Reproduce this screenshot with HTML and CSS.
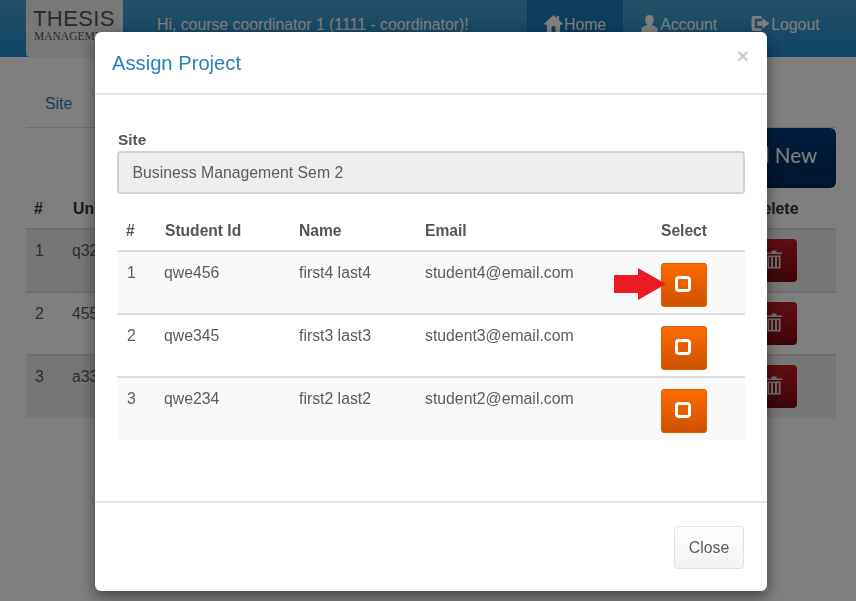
FILE: index.html
```html
<!DOCTYPE html>
<html lang="en">
<head>
    <meta charset="UTF-8">
    <title>Thesis Management</title>
    <link rel="stylesheet" href="styles.css">
</head>
<body>
    <header class="topbar">
        <div class="logo">
            <div class="logo-main">THESIS</div>
            <div class="logo-sub">MANAGEMENT</div>
        </div>
        <div class="greeting">Hi, course coordinator 1 (1111 - coordinator)!</div>
        <nav class="topnav">
            <a class="nav-item active">
                <svg class="nav-icon" viewBox="0 0 20 18"><path d="M10 0 L13.500 3.200 V1 H16 V5.500 L20 9.200 L19 10.200 H17 V18 H12 V12 H8 V18 H3 V10.200 H1 L0 9.200 Z"/></svg>Home
            </a>
            <a class="nav-item">
                <svg class="nav-icon" viewBox="0 0 18 18"><path d="M9 0 C12 0 13.500 2.200 13.500 5 C13.500 7.500 12.300 9.500 11.200 10.500 C14.500 11.500 17.500 12.800 17.500 15 V18 H0.500 V15 C0.500 12.800 3.500 11.500 6.800 10.500 C5.700 9.500 4.500 7.500 4.500 5 C4.500 2.200 6 0 9 0 Z"/></svg>Account
            </a>
            <a class="nav-item">
                <svg class="nav-icon" viewBox="0 0 20 18"><path d="M3 1 H11 V4 H4 V14 H11 V17 H3 Q0.500 17 0.500 14.500 V3.500 Q0.500 1 3 1 Z M12 3.500 L19.500 9 L12 14.500 V11.500 H6.500 V6.500 H12 Z"/></svg>Logout
            </a>
        </nav>
    </header>

    <main class="page">
        <div class="tabs"><a class="tab">Site</a></div>
        <div class="page-actions"><button class="btn-add">Add New</button></div>
        <table class="page-table">
            <thead>
                <tr><th class="col-num">#</th><th>Unit</th><th class="col-delete">Delete</th></tr>
            </thead>
            <tbody>
                <tr>
                    <td>1</td><td>q321</td>
                    <td class="col-delete"><button class="btn-delete"><svg class="trash" viewBox="0 0 16 18"><path d="M5.500 0 H10.500 V2 H16 V3.500 H0 V2 H5.500 Z M1.500 5 H14.500 V18 H1.500 Z M3.200 6.500 V16.500 H5 V6.500 Z M7 6.500 V16.500 H9 V6.500 Z M11 6.500 V16.500 H12.800 V6.500 Z" fill-rule="evenodd"/></svg></button></td>
                </tr>
                <tr>
                    <td>2</td><td>4556</td>
                    <td class="col-delete"><button class="btn-delete"><svg class="trash" viewBox="0 0 16 18"><path d="M5.500 0 H10.500 V2 H16 V3.500 H0 V2 H5.500 Z M1.500 5 H14.500 V18 H1.500 Z M3.200 6.500 V16.500 H5 V6.500 Z M7 6.500 V16.500 H9 V6.500 Z M11 6.500 V16.500 H12.800 V6.500 Z" fill-rule="evenodd"/></svg></button></td>
                </tr>
                <tr>
                    <td>3</td><td>a334</td>
                    <td class="col-delete"><button class="btn-delete"><svg class="trash" viewBox="0 0 16 18"><path d="M5.500 0 H10.500 V2 H16 V3.500 H0 V2 H5.500 Z M1.500 5 H14.500 V18 H1.500 Z M3.200 6.500 V16.500 H5 V6.500 Z M7 6.500 V16.500 H9 V6.500 Z M11 6.500 V16.500 H12.800 V6.500 Z" fill-rule="evenodd"/></svg></button></td>
                </tr>
            </tbody>
        </table>
    </main>

    <!-- Modal -->
    <div class="backdrop">
        <div class="modal">
            <div class="modal-header">
                <h4 class="modal-title">Assign Project</h4>
                <span class="modal-close">×</span>
            </div>
            <div class="modal-body">
                <label class="field-label" for="site-input">Site</label>
                <input class="field-input" id="site-input" type="text" value="Business Management Sem 2" disabled>
                <table class="student-table">
                    <thead>
                        <tr><th class="c-num">#</th><th class="c-id">Student Id</th><th class="c-name">Name</th><th class="c-email">Email</th><th class="c-select">Select</th></tr>
                    </thead>
                    <tbody>
                        <tr>
                            <td>1</td><td>qwe456</td><td>first4 last4</td><td>student4@email.com</td>
                            <td class="select-cell">
                                <svg class="arrow" viewBox="0 0 52 32"><path d="M0 7 H24 V0 L52 16 L24 32 V25 H0 Z"/></svg>
                                <button class="btn-select"><span class="select-mark"></span></button>
                            </td>
                        </tr>
                        <tr>
                            <td>2</td><td>qwe345</td><td>first3 last3</td><td>student3@email.com</td>
                            <td class="select-cell"><button class="btn-select"><span class="select-mark"></span></button></td>
                        </tr>
                        <tr>
                            <td>3</td><td>qwe234</td><td>first2 last2</td><td>student2@email.com</td>
                            <td class="select-cell"><button class="btn-select"><span class="select-mark"></span></button></td>
                        </tr>
                    </tbody>
                </table>
            </div>
            <div class="modal-footer">
                <button class="btn-close">Close</button>
            </div>
        </div>
    </div>
</body>
</html>
```

FILE: styles.css
```css
* {
    box-sizing: border-box;
}

html, body {
    height: 100%;
}

body {
    margin: 0;
    overflow: hidden;
    background-color: #fff;
    color: #5c5c5c;
    font-family: 'Liberation Sans', Arial, sans-serif;
    font-size: 15.8px;
}

/* Top bar */
.topbar {
    display: flex;
    align-items: flex-start;
    height: 57px;
    padding-left: 26px;
    background: linear-gradient(to bottom, #4c9fce, #1f8cce);
    color: #fff;
}

.logo {
    width: 97px;
    height: 57px;
    padding: 7px 0 0 7px;
    background-color: #f0f0f0;
    border-bottom-left-radius: 4px;
    color: #555;
    overflow: hidden;
}

.logo-main {
    font-size: 22px;
    line-height: 24px;
    letter-spacing: 0.4px;
}

.logo-sub {
    margin-left: 1px;
    font-family: 'Liberation Serif', serif;
    font-size: 11.5px;
    line-height: 10px;
    white-space: nowrap;
}

.greeting {
    margin-left: 34px;
    width: 370px;
    line-height: 50px;
}

.topnav {
    display: flex;
}

.nav-item {
    display: flex;
    align-items: flex-start;
    height: 57px;
    padding: 15px 17px 0;
    line-height: 20px;
}

.nav-item.active {
    background-color: #1a7ab8;
}

.nav-icon {
    width: 19px;
    height: 17px;
    margin-right: 1px;
    fill: #fff;
}

/* Page behind the modal */
.page {
    padding: 0 20px 0 26px;
}

.tabs {
    height: 71px;
    padding: 38px 0 0 19px;
    border-bottom: 1px solid #ddd;
}

.tab {
    color: #2a80b9;
}

.page-actions {
    display: flex;
    justify-content: flex-end;
}

.btn-add {
    width: 150px;
    height: 60px;
    border: none;
    border-radius: 6px;
    padding: 0 0 6px 28px;
    background: linear-gradient(to bottom, #003c7c, #002a58);
    color: #fff;
    font-family: Lato, sans-serif;
    font-size: 20.500px;
}

.page-table {
    width: 100%;
    margin-top: 11px;
    border-collapse: collapse;
}

.page-table th {
    height: 30px;
    padding: 0 8px 10px;
    text-align: left;
    color: #333;
}

.page-table td {
    height: 63px;
    padding: 12px 8px 0 9px;
    vertical-align: top;
    border-top: 2px solid #ddd;
    background-color: #eee;
}

.page-table td:nth-child(2) {
    padding-left: 7px;
}

.page-table tr:nth-child(2) td {
    background-color: #fff;
}

.col-num {
    width: 39px;
}

.page-table .col-delete {
    width: 85px;
    padding-left: 0;
    padding-right: 0;
}

.page-table td.col-delete {
    padding-top: 9px;
}

.btn-delete {
    display: block;
    width: 46px;
    height: 43px;
    border: none;
    border-radius: 4px;
    background: linear-gradient(to bottom, #c41c24, #7a0a10);
}

.trash {
    width: 16px;
    height: 19px;
    fill: #e4e4e4;
}

/* Modal */
.backdrop {
    position: fixed;
    top: 0;
    left: 0;
    width: 100%;
    height: 100%;
    background-color: rgba(0, 0, 0, 0.5);
}

.modal {
    display: flex;
    flex-direction: column;
    width: 672px;
    height: 559px;
    margin: 32px 0 0 95px;
    background-color: #fff;
    border-radius: 6px;
    box-shadow: 0 5px 15px rgba(0, 0, 0, 0.5);
}

.modal-header {
    display: flex;
    justify-content: space-between;
    height: 63px;
    padding: 19px 18px 0 17px;
    border-bottom: 2px solid #e5e5e5;
}

.modal-title {
    margin: 0;
    color: #2a80b9;
    font-size: 20.2px;
    font-weight: normal;
    line-height: 24px;
}

.modal-close {
    margin-top: -2px;
    color: #ccc;
    font-size: 21px;
    font-weight: bold;
    line-height: 14px;
}

.modal-body {
    flex: 1;
    padding: 36px 22px 0;
}

.field-label {
    display: block;
    margin: 0 0 2px 1px;
    color: #555;
    font-size: 15.4px;
    font-weight: bold;
    line-height: 18px;
}

.field-input {
    display: block;
    width: 100%;
    height: 43px;
    padding: 0 14px 0 13.500px;
    border: 2px solid #d2d2d2;
    border-radius: 4px;
    background-color: #eee;
    color: #5c5c5c;
    font-family: inherit;
    font-size: 15.8px;
}

.student-table {
    width: 100%;
    margin-top: 16px;
    border-collapse: collapse;
}

.student-table th {
    height: 41px;
    padding: 2px 9px 0;
    text-align: left;
    color: #555;
    font-size: 15.6px;
}

.student-table th.c-select {
    padding-left: 8px;
}

.student-table td {
    height: 63px;
    padding: 11px 8px 0 9px;
    vertical-align: top;
    border-top: 2px solid #ddd;
    line-height: 20px;
}

.student-table td:first-child {
    padding-left: 10px;
}

.student-table td:nth-child(2) {
    padding-left: 8px;
}

.student-table td.select-cell {
    padding-left: 8px;
}

.student-table tbody tr:nth-child(odd) td {
    background-color: #f9f9f9;
}

.c-num {
    width: 39px;
}

.c-id {
    width: 134px;
}

.c-name {
    width: 126px;
}

.c-email {
    width: 237px;
}

.select-cell {
    position: relative;
}

.btn-select {
    display: flex;
    align-items: center;
    justify-content: center;
    width: 46px;
    height: 44px;
    padding: 0 2px 2px 0;
    border: 1px solid #dd5f00;
    border-radius: 3px;
    background: linear-gradient(to bottom, #ff6a00, #cc5200);
}

.select-mark {
    display: block;
    flex: none;
    width: 16px;
    height: 16px;
    border: 3px solid #fff;
    border-radius: 4px;
}

.arrow {
    position: absolute;
    top: 16px;
    left: -39px;
    width: 52px;
    height: 32px;
    fill: #ed1c24;
    z-index: 1;
}

.modal-footer {
    display: flex;
    justify-content: flex-end;
    height: 90px;
    padding: 23px 23px 0;
    border-top: 2px solid #e5e5e5;
}

.btn-close {
    width: 70px;
    height: 43px;
    border: 1px solid #e0e0e0;
    border-radius: 4px;
    background: linear-gradient(to bottom, #fff, #f2f2f2);
    color: #5c5c5c;
    font-family: inherit;
    font-size: 15.8px;
}
```
